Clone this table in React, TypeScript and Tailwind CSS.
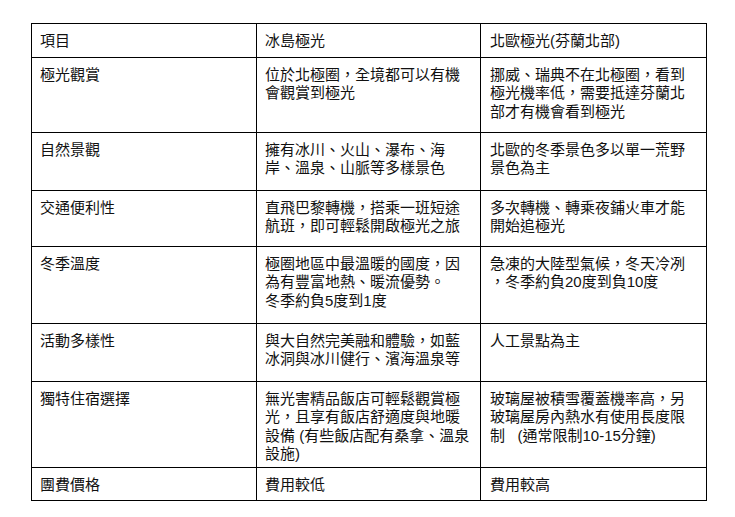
const ROWS: string[][][] = [
  [['項目'], ['冰島極光'], ['北歐極光(芬蘭北部)']],
  [
    ['極光觀賞'],
    ['位於北極圈，全境都可以有機', '會觀賞到極光'],
    ['挪威、瑞典不在北極圈，看到', '極光機率低，需要抵達芬蘭北', '部才有機會看到極光'],
  ],
  [
    ['自然景觀'],
    ['擁有冰川、火山、瀑布、海', '岸、溫泉、山脈等多樣景色'],
    ['北歐的冬季景色多以單一荒野', '景色為主'],
  ],
  [
    ['交通便利性'],
    ['直飛巴黎轉機，搭乘一班短途', '航班，即可輕鬆開啟極光之旅'],
    ['多次轉機、轉乘夜鋪火車才能', '開始追極光'],
  ],
  [
    ['冬季溫度'],
    ['極圈地區中最溫暖的國度，因', '為有豐富地熱、暖流優勢。', '冬季約負5度到1度'],
    ['急凍的大陸型氣候，冬天冷冽', '，冬季約負20度到負10度'],
  ],
  [
    ['活動多樣性'],
    ['與大自然完美融和體驗，如藍', '冰洞與冰川健行、濱海溫泉等'],
    ['人工景點為主'],
  ],
  [
    ['獨特住宿選擇'],
    ['無光害精品飯店可輕鬆觀賞極', '光，且享有飯店舒適度與地暖', '設備 (有些飯店配有桑拿、溫泉', '設施)'],
    ['玻璃屋被積雪覆蓋機率高，另', '玻璃屋房內熱水有使用長度限', '制\u00a0\u00a0 (通常限制10-15分鐘)'],
  ],
  [['團費價格'], ['費用較低'], ['費用較高']],
]

export default function App() {
  return (
    <div
      className="min-h-screen w-[735px] bg-white pl-[31px] pt-[23px] text-[15px] leading-[18.4px] text-[#111]"
      style={{ fontFamily: '"Liberation Sans", "Noto Sans CJK TC", sans-serif' }}
    >
      <div className="grid w-[676px] grid-cols-[225px_224px_226px] grid-rows-[34px_75px_58px_56px_77px_58px_86px_33px] border-l border-t border-black">
        {ROWS.map((row, r) =>
          row.map((lines, c) => (
            <div
              key={`${r}-${c}`}
              className={`border-b border-r border-black pt-[8px] ${c === 2 ? 'pl-[9px]' : 'pl-[8px]'}`}
            >
              {lines.map((line, i) => (
                <div key={i} className="whitespace-nowrap">
                  {line}
                </div>
              ))}
            </div>
          ))
        )}
      </div>
    </div>
  )
}
